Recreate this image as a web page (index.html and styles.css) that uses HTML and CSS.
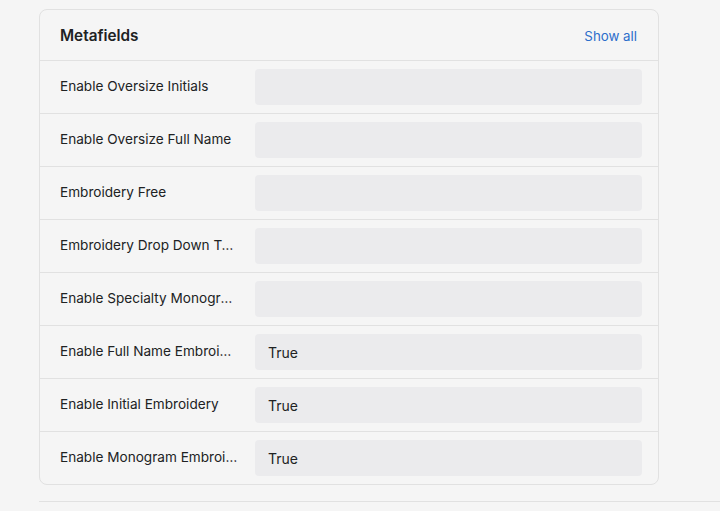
FILE: index.html
```html
<!DOCTYPE html>
<html>
<head>
<meta charset="utf-8">
<link rel="stylesheet" href="styles.css">
</head>
<body>
<div class="page">
  <section class="card">
    <header class="card-header">
      <h2 class="title">Metafields</h2>
      <a class="show-all" href="#">Show all</a>
    </header>
    <div class="row"><div class="label">Enable Oversize Initials</div><div class="value"></div></div>
    <div class="row"><div class="label">Enable Oversize Full Name</div><div class="value"></div></div>
    <div class="row"><div class="label">Embroidery Free</div><div class="value"></div></div>
    <div class="row"><div class="label">Embroidery Drop Down Type</div><div class="value"></div></div>
    <div class="row"><div class="label">Enable Specialty Monogram</div><div class="value"></div></div>
    <div class="row"><div class="label">Enable Full Name Embroidery</div><div class="value">True</div></div>
    <div class="row"><div class="label">Enable Initial Embroidery</div><div class="value">True</div></div>
    <div class="row"><div class="label">Enable Monogram Embroidery</div><div class="value">True</div></div>
  </section>
  <div class="divider"></div>
</div>
</body>
</html>
```
FILE: styles.css
```css
html, body {
  margin: 0;
  padding: 0;
  background: #f5f5f5;
  font-family: Inter, "Noto Sans", sans-serif;
  color: #202223;
}
.page {
  padding: 9px 0 0 39px;
}
.card {
  width: 618px;
  border: 1px solid #e1e1e1;
  border-radius: 8px;
  background: #f5f5f5;
}
.card-header {
  height: 50px;
  display: flex;
  align-items: center;
  justify-content: space-between;
  padding: 0 21px 0 20px;
  border-bottom: 1px solid #e1e1e1;
}
.title {
  margin: 0;
  font-size: 15.3px;
  font-weight: 600;
  color: #202223;
}
.show-all {
  font-size: 13.3px;
  color: #2c6ecb;
  text-decoration: none;
  margin-top: 1px;
}
.row {
  display: flex;
  align-items: center;
  height: 52px;
  padding: 0 16px 0 20px;
  border-bottom: 1px solid #e1e1e1;
  gap: 16px;
}
.row:last-child {
  border-bottom: none;
}
.label {
  width: 179px;
  flex: none;
  font-size: 13.6px;
  white-space: nowrap;
  overflow: hidden;
  text-overflow: ellipsis;
  color: #202223;
  margin-top: -2px;
}
.value {
  flex: 1;
  height: 36px;
  box-sizing: border-box;
  background: #ebebed;
  border-radius: 4px;
  padding: 0 13px;
  display: flex;
  align-items: center;
  font-size: 14px;
}
.divider {
  margin-top: 16px;
  height: 1px;
  background: #e1e1e1;
}
```
